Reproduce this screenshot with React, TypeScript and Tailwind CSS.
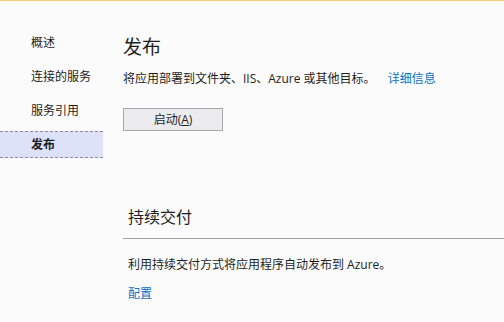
const font = { fontFamily: '"Open Sans", "Noto Sans CJK SC", sans-serif' };

const navItems = ["概述", "连接的服务", "服务引用", "发布"];

const App = () => {
  const active = "发布";
  return (
    <div
      className="w-[504px] h-[322px] flex bg-[#fbfbfb] border-t border-[#f5cc84] text-[#1e1e1e] overflow-hidden"
      style={font}
    >
      <nav className="w-[103px] shrink-0 flex flex-col gap-[7px] pt-[28px]">
        {navItems.map((item) =>
          item === active ? (
            <div
              key={item}
              className="h-[27px] flex items-center pl-[31px] text-[12px] font-bold bg-[#dde2f8] border-y border-dashed border-[#8a8a9a]"
            >
              {item}
            </div>
          ) : (
            <div key={item} className="h-[27px] flex items-center pl-[31px] text-[12px]">
              {item}
            </div>
          )
        )}
      </nav>
      <main className="flex-1 pl-[20px] pt-[34px]">
        <h1 className="text-[19px] leading-[24px]">发布</h1>
        <p className="mt-[11px] text-[12px] leading-[18px]">
          将应用部署到文件夹、IIS、Azure 或其他目标。
          <a className="ml-[12px] text-[#0e70c0] cursor-pointer">详细信息</a>
        </p>
        <button className="mt-[20px] w-[100px] h-[23px] bg-[#ececef] border border-[#a8a8a8] text-[12px] leading-none">
          启动(<span className="underline">A</span>)
        </button>
        <section className="mt-[75px]">
          <h2 className="pl-[5px] pb-[10px] text-[16px] leading-[22px] border-b border-[#a0a0a0]">
            持续交付
          </h2>
          <p className="mt-[17px] pl-[5px] text-[12px] leading-[18px]">
            利用持续交付方式将应用程序自动发布到 Azure。
          </p>
          <a className="block mt-[11px] pl-[5px] text-[12px] leading-[18px] text-[#0e70c0] cursor-pointer">
            配置
          </a>
        </section>
      </main>
    </div>
  );
};

export default App;
